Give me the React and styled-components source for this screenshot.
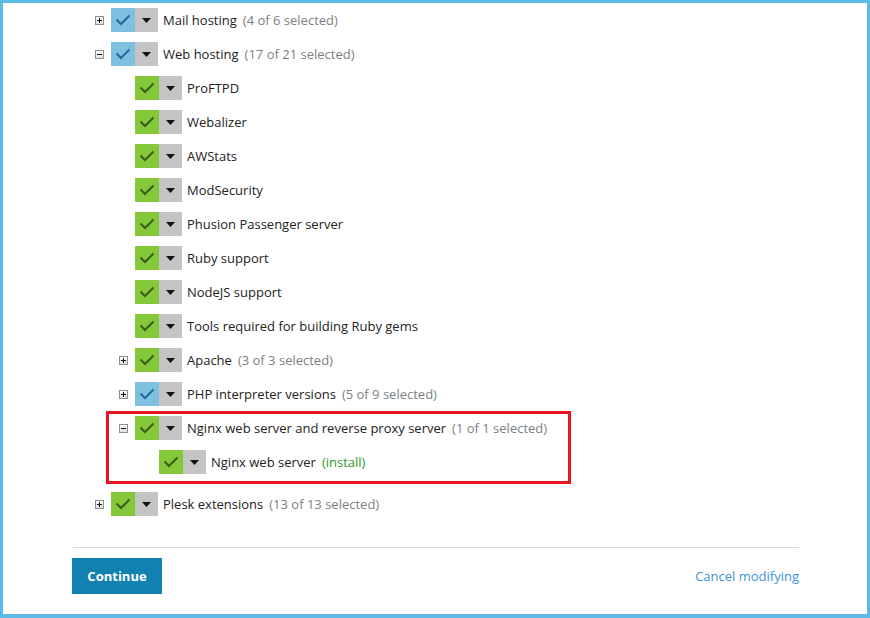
import React from "react";
import styled, { createGlobalStyle } from "styled-components";

const GlobalStyle = createGlobalStyle`
  html, body { margin: 0; padding: 0; background: #fff; }
  body { font-family: "Open Sans", "Liberation Sans", sans-serif; }
`;

const Frame = styled.div`
  box-sizing: border-box;
  width: 870px;
  height: 618px;
  border: 3px solid #5bbbe5;
  border-bottom-width: 4px;
  background: #fff;
  overflow: hidden;
`;

const Content = styled.div`
  width: 727px;
  margin-left: 69px;
`;

const List = styled.div`
  display: flex;
  flex-direction: column;
`;

const Row = styled.div`
  display: flex;
  align-items: center;
  height: 34px;
  padding-left: ${(p) => 23 + p.$level * 24}px;
  font-size: 13px;
  color: #222;
`;

const Expander = styled.span`
  box-sizing: border-box;
  width: 9px;
  height: 9px;
  margin-right: 7px;
  border: 1px solid #8a8f96;
  background: linear-gradient(#fff, #dde0e4);
  display: flex;
  align-items: center;
  justify-content: center;
  visibility: ${(p) => (p.$hidden ? "hidden" : "visible")};
`;

const Toggle = styled.div`
  display: flex;
  height: 24px;
  margin-right: 5px;
`;

const CheckPart = styled.span`
  width: 24px;
  height: 24px;
  display: flex;
  align-items: center;
  justify-content: center;
  background: ${(p) => (p.$partial ? "#7dc0df" : "#85c83a")};
`;

const CaretPart = styled.span`
  width: 23px;
  height: 24px;
  display: flex;
  align-items: center;
  justify-content: center;
  background: #c4c4c4;
`;

const Count = styled.span`
  margin-left: 6px;
  color: ${(p) => (p.$install ? "#2c9a2c" : "#7b7f84")};
`;

const Highlight = styled.div`
  position: relative;
  margin-bottom: 8px;

  &::after {
    content: "";
    position: absolute;
    top: 0;
    left: 34px;
    width: 465px;
    bottom: -5px;
    box-sizing: border-box;
    border: 3px solid #e8141f;
    pointer-events: none;
  }
`;

const Separator = styled.hr`
  margin: 26px 0 0 1px;
  border: none;
  border-top: 1px solid #dadada;
  height: 0;
`;

const Footer = styled.div`
  display: flex;
  align-items: center;
  justify-content: space-between;
  margin-top: 10px;
`;

const Button = styled.button`
  width: 90px;
  height: 36px;
  border: none;
  background: #1280b1;
  color: #fff;
  font-family: "Open Sans", "Liberation Sans", sans-serif;
  font-size: 13px;
  font-weight: 700;
  cursor: pointer;
`;

const CancelLink = styled.a`
  font-size: 13px;
  color: #3c94dc;
  text-decoration: none;
  cursor: pointer;
`;

function ExpandIcon({ open }) {
  return (
    <svg width="7" height="7" viewBox="0 0 7 7">
      <rect x="1" y="3" width="5" height="1" fill="#111" />
      {!open && <rect x="3" y="1" width="1" height="5" fill="#111" />}
    </svg>
  );
}

function Check({ partial }) {
  return (
    <svg width="16" height="12" viewBox="0 0 16 12">
      <polyline
        points="1.5,5.5 6,10 14.5,1.5"
        fill="none"
        stroke={partial ? "#1b6e9c" : "#3b5b1f"}
        strokeWidth="2"
      />
    </svg>
  );
}

function Caret() {
  return (
    <svg width="9" height="5" viewBox="0 0 9 5">
      <polygon points="0,0 9,0 4.5,5" fill="#111" />
    </svg>
  );
}

function Item({ level, expander, open, partial, label, count, install }) {
  return (
    <Row $level={level}>
      <Expander $hidden={!expander}>{expander && <ExpandIcon open={open} />}</Expander>
      <Toggle>
        <CheckPart $partial={partial}>
          <Check partial={partial} />
        </CheckPart>
        <CaretPart>
          <Caret />
        </CaretPart>
      </Toggle>
      <span>{label}</span>
      {count && <Count $install={install}>{count}</Count>}
    </Row>
  );
}

const webChildren = [
  "ProFTPD",
  "Webalizer",
  "AWStats",
  "ModSecurity",
  "Phusion Passenger server",
  "Ruby support",
  "NodeJS support",
  "Tools required for building Ruby gems",
];

export default function App() {
  return (
    <Frame>
      <GlobalStyle />
      <Content>
        <List>
          <Item level={0} expander partial label="Mail hosting" count="(4 of 6 selected)" />
          <Item level={0} expander open partial label="Web hosting" count="(17 of 21 selected)" />
          {webChildren.map((name) => (
            <Item key={name} level={1} label={name} />
          ))}
          <Item level={1} expander label="Apache" count="(3 of 3 selected)" />
          <Item level={1} expander partial label="PHP interpreter versions" count="(5 of 9 selected)" />
          <Highlight>
            <Item
              level={1}
              expander
              open
              label="Nginx web server and reverse proxy server"
              count="(1 of 1 selected)"
            />
            <Item level={2} label="Nginx web server" count="(install)" install />
          </Highlight>
          <Item level={0} expander label="Plesk extensions" count="(13 of 13 selected)" />
        </List>
        <Separator />
        <Footer>
          <Button>Continue</Button>
          <CancelLink>Cancel modifying</CancelLink>
        </Footer>
      </Content>
    </Frame>
  );
}
